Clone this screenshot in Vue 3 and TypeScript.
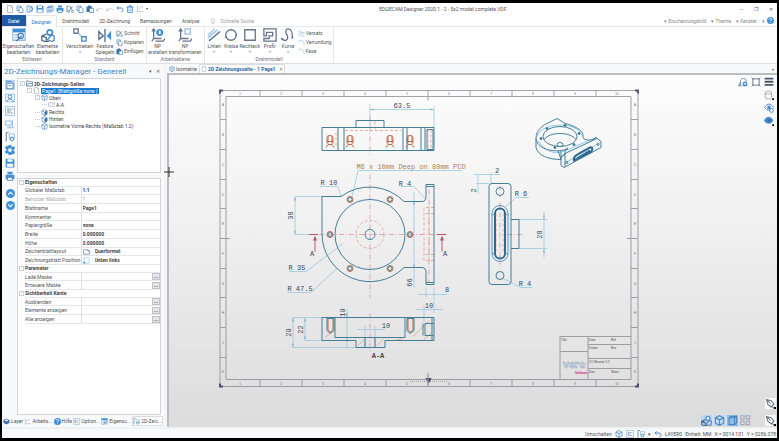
<script setup lang="ts">
import { ref } from 'vue'

interface Tool { label: string; icon: string; width?: string; menu?: boolean }
interface Group { name: string; tools: Tool[]; small: Tool[] }
interface Prop { label: string; value?: string; kind: 'head' | 'text' | 'more' | 'icon'; muted?: boolean; icon?: string }

const quick = ['page', 'copy', 'export', 'save', 'pages', 'print', 'cut', 'copy', 'paste', 'undo', 'undo', 'redo', 'trash', 'plane']
const menus = ['Drahtmodell', '2D-Zeichnung', 'Bemassungen', 'Analyse']
const groups: Group[] = [
  { name: 'Editieren', small: [], tools: [
    { label: 'Eigenschaften bearbeiten', icon: 'props', width: 'wide' },
    { label: 'Elemente bearbeiten', icon: 'element' }] },
  { name: 'Standard', tools: [
    { label: 'Verschieben', icon: 'move', menu: true, width: 'wide' },
    { label: 'Feature Spiegeln', icon: 'mirror', width: 'slim' }],
    small: [{ label: 'Schnitt', icon: 'cut' }, { label: 'Kopieren', icon: 'copy' }, { label: 'Einfügen', icon: 'paste' }] },
  { name: 'Arbeitsebene', small: [], tools: [
    { label: 'NP erstellen', icon: 'npnew', width: 'slim' },
    { label: 'NP transformieren', icon: 'npmove', width: 'broad' }] },
  { name: 'Drahtmodell', tools: [
    { label: 'Linien', icon: 'lines', menu: true, width: 'thin' },
    { label: 'Kreise', icon: 'circle', menu: true, width: 'thin' },
    { label: 'Rechteck', icon: 'rect', menu: true, width: 'slim' },
    { label: 'Profil', icon: 'profile', menu: true, width: 'slim' },
    { label: 'Kurve', icon: 'curve', menu: true, width: 'thin' }],
    small: [{ label: 'Versatz', icon: 'offset' }, { label: 'Verrundung', icon: 'fillet' }, { label: 'Fase', icon: 'fillet' }] }
]
const side = ['sheet', 'profileView', 'sheetGrid', 'rows', 'detail', 'gear', 'save', 'print']
const tree = [
  { text: '2D-Zeichnungs-Seiten', icon: 'folder', level: 0, open: true },
  { text: 'Page1 (Blattgröße none )', icon: 'page', level: 1, open: true, selected: true },
  { text: 'Oben', icon: 'cube', level: 2, open: true },
  { text: 'A-A', icon: 'section', level: 3 },
  { text: 'Rechts', icon: 'cubeSide', level: 2 },
  { text: 'Hinten', icon: 'cubeSide', level: 2 },
  { text: 'Isometrie Vorne Rechts (Maßstab 1:2)', icon: 'cube', level: 2 }
]
const props = ref<Prop[]>([
  { label: 'Eigenschaften', kind: 'head' },
  { label: 'Globaler Maßstab', value: '1:1', kind: 'text' },
  { label: 'Benutzer Maßstab', value: '1', kind: 'text', muted: true },
  { label: 'Blattname', value: 'Page1', kind: 'text' },
  { label: 'Kommentar', value: '', kind: 'text' },
  { label: 'Papiergröße', value: 'none', kind: 'text' },
  { label: 'Breite', value: '0.000000', kind: 'text' },
  { label: 'Höhe', value: '0.000000', kind: 'text' },
  { label: 'Zeichenblattlayout', value: 'Querformat', kind: 'icon', icon: 'landscape' },
  { label: 'Zeichnungsblatt Position', value: 'Unten links', kind: 'icon', icon: 'corner' },
  { label: 'Parameter', kind: 'head' },
  { label: 'Lade Maske', value: '', kind: 'more' },
  { label: 'Erneuere Maske', value: '', kind: 'more' },
  { label: 'Sichtbarkeit Kante', kind: 'head' },
  { label: 'Ausblenden', value: '', kind: 'more' },
  { label: 'Elemente anzeigen', value: '', kind: 'more' },
  { label: 'Alle anzeigen', value: '', kind: 'more' }
])
const panels = [
  { text: 'Layer', icon: 'layer' }, { text: 'Arbeits...', icon: 'plane' }, { text: 'Hilfe', icon: 'help' },
  { text: 'Option...', icon: 'sheetGrid' }, { text: 'Eigensc...', icon: 'props' }, { text: '2D-Zeic...', icon: 'detail' }
]
const search = ref('')

const topTicks = [260, 302, 344, 386, 428, 470, 512, 554, 596]
const sideTicks = [120, 150, 180, 209, 239, 269, 298, 328, 358]
const topLabels = [240, 281, 323, 365, 407, 449, 491, 533, 575, 617]
const sideLabels = [106, 136, 166, 196, 225, 255, 285, 314, 344, 373]
const holes = [[330, 235], [350, 200], [390, 200], [410, 235], [350, 269], [390, 269]]
const topHoles = [330, 350, 390, 410]
</script>

<template>
  <svg class="defs" aria-hidden="true">
    <symbol id="page" viewBox="0 0 16 16"><path class="ln gy" d="M3 1h7l3 3v11H3zM10 1v3h3" /></symbol>
    <symbol id="copy" viewBox="0 0 16 16"><path class="ln" d="M2 2h8v9H2z" /><path class="ln fw" d="M6 5h5l3 3v7H6z" /></symbol>
    <symbol id="export" viewBox="0 0 16 16"><path class="ln" d="M2 2h6v4M2 2v12h6v-4M5 8h9M10 4l4 4-4 4" /><path class="ln" d="M9 2l5 3M9 14l5-3" /></symbol>
    <symbol id="save" viewBox="0 0 16 16"><path class="fl" d="M1 1h12l2 2v12H1z" /><path class="wh" d="M4 2h8v4H4zM3 9h10v5H3z" /></symbol>
    <symbol id="pages" viewBox="0 0 16 16"><path class="ln fw" d="M5 2h9v10H5z" /><path class="ln fw" d="M2 5h8v9H2z" /><path class="ln" d="M4 8h4M4 11h4M7 4h5" /></symbol>
    <symbol id="print" viewBox="0 0 16 16"><path class="fl" d="M1 6h14v7H1zM4 1h8v4H4z" /><path class="ln fw" d="M4 10h8v5H4z" /></symbol>
    <symbol id="cut" viewBox="0 0 16 16"><path class="ln dk" d="M2 2v12M7 2l6 9M13 3L6 12" /><circle class="ln" cx="5" cy="13" r="2" /><circle class="ln" cx="13" cy="13" r="2" /><path class="ln" d="M2 2h4" /></symbol>
    <symbol id="paste" viewBox="0 0 16 16"><path class="fl nv" d="M1 3h11v11H1zM4 1h5v3H4z" /><path class="ln fw" d="M7 7h8v8H7z" /></symbol>
    <symbol id="undo" viewBox="0 0 16 16"><path class="ln lt" d="M2 7l-1 5 5-1M2 11c3-6 9-6 12-1" /></symbol>
    <symbol id="redo" viewBox="0 0 16 16"><path class="ln th" d="M5 3L2 6l3 3M2 6h8c5 0 5 7 1 8" /></symbol>
    <symbol id="trash" viewBox="0 0 16 16"><path class="ln" d="M3 4h10v11H3zM1 4h14M6 1h4v3M6 7v6M10 7v6" /></symbol>
    <symbol id="plane" viewBox="0 0 16 16"><path class="ln lt" d="M3 1v12h12M3 13l-2 2M6 9l3-5h5" /></symbol>
    <symbol id="props" viewBox="0 0 16 16"><path class="ln lb fw" d="M1 1h14v13H1z" /><path class="fl" d="M1 1h14v4H1z" /><path class="ln lb" d="M3 8h4M3 11h4" /><circle class="ln" cx="10" cy="9" r="3" /><path class="ln dk" d="M5 15l6-6" /></symbol>
    <symbol id="element" viewBox="0 0 16 16"><path class="ln dk" d="M6 7L1 9v5l5 2 5-2M6 10v6M1 9l5 2" /><circle class="fl" cx="10" cy="5" r="4" /><circle class="wh" cx="10" cy="5" r="2" /><path class="ln" d="M7 14l5-6 3 1v5l-4 2" /></symbol>
    <symbol id="move" viewBox="0 0 16 16"><path class="ln gd" d="M1 1h5v5H1z" /><path class="ln lb" d="M6 6l4 4" /><path class="ln" d="M10 10h5v5h-5z" /></symbol>
    <symbol id="mirror" viewBox="0 0 16 16"><path class="ln dk" d="M1 4v9l5-4z" /><path class="fl" d="M15 3v11l-5-5z" /><path class="ln dk" d="M8 1v15" /></symbol>
    <symbol id="npnew" viewBox="0 0 16 16"><path class="ln gd" d="M3 2v10h9M3 12l-2 3M1 4l2-3 2 3M5 15h9l2-3" /><circle class="fl" cx="10" cy="5" r="4" /><path class="wh" d="M9 3h2v4H9z" /></symbol>
    <symbol id="npmove" viewBox="0 0 16 16"><path class="ln gd" d="M3 2v10h9M3 12l-2 3M1 4l2-3 2 3M5 15h9l2-3" /><path class="ln lb" d="M8 1h6v6H8z" /></symbol>
    <symbol id="lines" viewBox="0 0 16 16"><path class="ln lb" d="M1 11L12 2M1 8l8-7" /><path class="ln dk" d="M3 14L15 4" /><circle class="fl nv" cx="3" cy="14" r="1" /></symbol>
    <symbol id="circle" viewBox="0 0 16 16"><circle class="ln gd" cx="8" cy="8" r="6" /><circle class="fl nv" cx="2" cy="10" r="1" /><circle class="fl nv" cx="14" cy="8" r="1" /></symbol>
    <symbol id="rect" viewBox="0 0 16 16"><path class="ln gd" d="M2 2h12v12H2z" /></symbol>
    <symbol id="profile" viewBox="0 0 16 16"><path class="ln gd" d="M1 9V1h14v14H1v-3h6V9h4V5H4v4z" /></symbol>
    <symbol id="curve" viewBox="0 0 16 16"><path class="ln gd" d="M1 12c4 5 8 1 6-4-3-4-1-7 1-7 4 0 5 3 5 10" /><circle class="fl nv" cx="1" cy="12" r="1" /><circle class="fl nv" cx="13" cy="11" r="1" /></symbol>
    <symbol id="offset" viewBox="0 0 16 16"><path class="ln lb" d="M1 2h5l3 4h6M1 8h5l3-4M1 13h4l4-4h6M9 14h6" /></symbol>
    <symbol id="fillet" viewBox="0 0 16 16"><path class="ln lb" d="M2 3h5c4 0 7 3 7 11" /></symbol>
    <symbol id="sheet" viewBox="0 0 16 16"><path class="fl lb" d="M0 0h16v16H0z" /><path class="ln fw" d="M3 5h10v9H3zM6 9h4" /><path class="ln" d="M1 2h9" /></symbol>
    <symbol id="profileView" viewBox="0 0 16 16"><path class="ln lb" d="M1 2h14v12H1z" /><circle class="ln" cx="8" cy="6" r="3" /><path class="ln" d="M3 14c1-6 9-6 10 0" /></symbol>
    <symbol id="sheetGrid" viewBox="0 0 16 16"><path class="ln fw lb" d="M1 1h14v14H1z" /><path class="ln gy" d="M3 5h10M3 8h7M3 11h10M5 3v9" /></symbol>
    <symbol id="rows" viewBox="0 0 16 16"><path class="ln lb" d="M1 3h9v7H1zM12 2v12M3 14h11M7 10v4" /></symbol>
    <symbol id="detail" viewBox="0 0 16 16"><path class="ln gd" d="M2 1v14M2 1h4" /><path class="ln lb" d="M7 3h8v7H7z" /><circle class="ln" cx="11" cy="11" r="3" /></symbol>
    <symbol id="gear" viewBox="0 0 16 16"><path class="fl" d="M6 0h4l1 3 4-1 1 4-3 2 3 3-2 4-3-1-1 2H6l-1-3-4 1-1-4 3-2-3-3 2-4 3 1z" /><circle class="wh" cx="8" cy="8" r="3" /></symbol>
    <symbol id="up" viewBox="0 0 16 16"><circle class="fl" cx="8" cy="8" r="8" /><path class="lnw" d="M4 10l4-4 4 4" /></symbol>
    <symbol id="down" viewBox="0 0 16 16"><circle class="fl" cx="8" cy="8" r="8" /><path class="lnw" d="M4 6l4 4 4-4" /></symbol>
    <symbol id="help" viewBox="0 0 16 16"><circle class="fl" cx="8" cy="8" r="8" /><path class="lnw" d="M5 6c0-4 7-3 6 0-1 2-3 2-3 4M8 12v1" /></symbol>
    <symbol id="folder" viewBox="0 0 16 16"><path class="ln dk" d="M1 2h5l1 2h8v10H1z" /><path class="ln" d="M4 14V8h11" /></symbol>
    <symbol id="cube" viewBox="0 0 16 16"><path class="ln" d="M8 1l6 3v8l-6 3-6-3V4zM2 4l6 3 6-3M8 7v8" /></symbol>
    <symbol id="cubeSide" viewBox="0 0 16 16"><path class="ln" d="M8 1l6 3v8l-6 3-6-3V4zM2 4l6 3 6-3" /><path class="fl nv" d="M8 7l6-3v8l-6 3z" /></symbol>
    <symbol id="cubeLight" viewBox="0 0 16 16"><path class="ln" d="M3 4l3-2h8v9l-3 3H3zM3 4h8v10M11 4l3-2" /></symbol>
    <symbol id="section" viewBox="0 0 16 16"><path class="ln lt" d="M1 4h14v9H1zM1 10l5-6M6 13l8-9" /></symbol>
    <symbol id="landscape" viewBox="0 0 16 16"><path class="ln gd" d="M1 4h10l4 3v7H1zM11 4v3h4" /></symbol>
    <symbol id="corner" viewBox="0 0 16 16"><path class="ln lb" d="M2 2h12v12H2z" /><path class="fl" d="M1 11h4v4H1z" /></symbol>
    <symbol id="layer" viewBox="0 0 16 16"><path class="fl nv" d="M8 1l7 4v6l-7 4-7-4V5z" /><path class="wh" d="M8 3l4 2-4 3-4-3z" /></symbol>
    <symbol id="zoomFit" viewBox="0 0 16 16"><path class="ln gd" d="M4 12C2 0 13 0 13 7M4 9l-3 5h5" /><circle class="fl" cx="11" cy="11" r="4" /><path class="lnw" d="M9 11h4" /></symbol>
    <symbol id="fit" viewBox="0 0 16 16"><path class="ln gd" d="M3 3h10v10H3zM1 1l3 3M15 1l-3 3M1 15l3-3M15 15l-3-3" /></symbol>
    <symbol id="list" viewBox="0 0 16 16"><path class="fl gr" d="M1 1h14v3H1zM1 6h14v3H1zM1 11h14v3H1z" /></symbol>
    <symbol id="cylinder" viewBox="0 0 16 16"><path class="ln gy" d="M2 4c0-3 10-3 10 0v8c0 3-10 3-10 0zM2 4c0 3 10 3 10 0" /><path class="fl bk" d="M13 13h3v3h-3z" /></symbol>
    <symbol id="eye" viewBox="0 0 16 16"><path class="ln fw" d="M1 7c4-7 10-7 14 0-4 6-10 6-14 0z" /><circle class="fl" cx="8" cy="7" r="3" /><circle class="ln fw" cx="12" cy="12" r="3" /></symbol>
    <symbol id="eyeFull" viewBox="0 0 16 16"><path class="fl" d="M0 7c4-8 11-8 15 0-4 7-11 7-15 0z" /><circle class="fl nv" cx="8" cy="7" r="3" /><path class="fl bk" d="M13 13h3v3h-3z" /></symbol>
    <symbol id="pen" viewBox="0 0 16 16"><path class="ln gd" d="M2 2l7 2 4 5-4 4-5-4zM2 2l6 6M10 12l3 3" /><path class="fl bk" d="M13 13h3v3h-3z" /></symbol>
    <symbol id="dots" viewBox="0 0 16 16"><path class="ln gy" d="M1 1h5v5H1zM9 1h5v5H9zM1 9h5v5H1zM9 9h5v5H9z" /></symbol>
  </svg>

  <main class="app">
    <header class="title">
      <nav class="quick" aria-label="Schnellzugriff">
        <button v-for="(q, i) in quick" :key="i" type="button"><svg><use :href="'#' + q" /></svg></button>
        <span class="caret">▾</span>
      </nav>
      <span class="name">EDGECAM Designer 2020.1 - 2 - 5x2 model complete.VDF</span>
      <div class="win"><button type="button">–</button><button type="button">❐</button><button type="button">✕</button></div>
    </header>

    <nav class="menu">
      <button type="button" class="file">Datei</button>
      <button type="button" class="active">Designer</button>
      <button v-for="m in menus" :key="m" type="button">{{ m }}</button>
      <label class="search">
        <svg viewBox="0 0 16 16"><path class="ln gy" d="M5 10c-6-11 12-11 6 0v3H5zM6 15h4" /></svg>
        <input v-model="search" type="search" placeholder="Schnelle Suche" aria-label="Schnelle Suche">
      </label>
      <div class="view">
        <button type="button">▾ Erscheinungsbild</button><button type="button">▾ Thema</button><button type="button">▾ Fenster</button>
        <button type="button">▾ <svg><use href="#help" /></svg></button>
      </div>
    </nav>

    <section class="ribbon">
      <div v-for="g in groups" :key="g.name" class="group">
        <div class="tools">
          <button v-for="t in g.tools" :key="t.label" type="button" class="tool" :class="t.width">
            <svg><use :href="'#' + t.icon" /></svg><span>{{ t.label }}</span><i v-if="t.menu">▾</i>
          </button>
          <div v-if="g.small.length" class="smalls">
            <button v-for="s in g.small" :key="s.label" type="button"><svg><use :href="'#' + s.icon" /></svg>{{ s.label }}</button>
          </div>
        </div>
        <span class="caption">{{ g.name }}</span>
      </div>
    </section>

    <section class="body">
      <aside class="manager">
        <header><h1>2D-Zeichnungs-Manager - Generell</h1><button type="button">▾</button><button type="button">✕</button></header>
        <div class="cols">
          <nav class="side">
            <button v-for="s in side" :key="s" type="button"><svg><use :href="'#' + s" /></svg></button>
            <button type="button" class="round first"><svg><use href="#up" /></svg></button>
            <button type="button" class="round"><svg><use href="#down" /></svg></button>
          </nav>
          <div class="stack">
            <ul class="tree">
              <li v-for="n in tree" :key="n.text" :class="['l' + n.level, { selected: n.selected }]">
                <b v-if="n.open" class="box">−</b><b v-else class="twig"></b>
                <svg><use :href="'#' + n.icon" /></svg><span>{{ n.text }}</span>
              </li>
            </ul>
            <div class="sheet">
              <table>
                <colgroup><col class="c-gut"><col class="c-label"><col></colgroup>
                <tbody>
                  <tr v-for="(p, i) in props" :key="i" :class="[p.kind, { muted: p.muted }]">
                    <td class="gut"><b v-if="p.kind === 'head'" class="box">−</b></td>
                    <th v-if="p.kind === 'head'" colspan="2" scope="rowgroup">{{ p.label }}</th>
                    <template v-else>
                      <th scope="row"><label :for="'p' + i">{{ p.label }}</label></th>
                      <td><div class="cell">
                        <svg v-if="p.icon"><use :href="'#' + p.icon" /></svg>
                        <input :id="'p' + i" v-model="p.value" type="text">
                        <button v-if="p.kind === 'more'" type="button">...</button>
                      </div></td>
                    </template>
                  </tr>
                </tbody>
              </table>
            </div>
          </div>
        </div>
        <nav class="panels">
          <button v-for="(p, i) in panels" :key="p.text" type="button" :class="{ on: i === 5 }"><svg><use :href="'#' + p.icon" /></svg>{{ p.text }}</button>
        </nav>
      </aside>

      <section class="work">
        <nav class="docs">
          <button type="button"><svg><use href="#cube" /></svg>Isometrie</button>
          <button type="button" class="on"><svg><use href="#page" /></svg>2D Zeichnungsseite - 1 Page1 <i>✕</i></button>
          <span class="caret">▾</span>
        </nav>
        <div class="canvas">
          <svg class="drawing" viewBox="169 76 608 351">
            <g class="frame">
              <path d="M220 91H638V387H220ZM226 97H631V380H226Z" />
              <path v-for="x in topTicks" :key="'t' + x" :d="`M${x} 91v${x === 428 ? 10 : 6}M${x} ${x === 428 ? 376 : 380}V387`" />
              <path v-for="y in sideTicks" :key="'s' + y" :d="`M220 ${y}h${y === 239 ? 10 : 6}M${y === 239 ? 627 : 631} ${y}H638`" />
              <text v-for="(x, i) in topLabels" :key="'a' + x" :x="x" y="95">{{ i + 1 }}</text>
              <text v-for="(x, i) in topLabels" :key="'b' + x" :x="x" y="385">{{ i + 1 }}</text>
              <text v-for="(y, i) in sideLabels" :key="'c' + y" x="635" :y="y">{{ 'ABCDEFGHJK'[i] }}</text>
              <text v-for="(y, i) in sideLabels" :key="'d' + y" x="223" :y="y">{{ 'ABCDEFGHJK'[i] }}</text>
              <path class="mark" d="M635 91h3v3M635 387h3v-3M223 387h-3v-3M223 91h-3v3" />
              <path class="dots" d="M410 382H447" /><path class="tri" d="M426 379h5l-2 4z" /><path d="M428 373V386" />
              <path d="M560 337H631M560 337V380M588 337V380M560 352H588M588 345H631M588 359H631M588 369H631" />
            </g>
            <g class="block">
              <text x="561" y="341">Title</text><text x="589" y="341">Date</text><text x="611" y="341">Ref</text>
              <text x="589" y="349">Drawn</text><text x="611" y="349">Rev</text><text x="589" y="363">CC Reactor 1:1</text>
              <text x="589" y="373">Size</text><text x="611" y="373">Sheet</text>
              <text class="vero" x="563" y="368">vero</text><text class="soft" x="575" y="374">Software</text>
            </g>

            <g class="dim">
              <path d="M370 105V128M434 107V128M370 110H434M295 197H322M295 235H318M295 197V235M414 193V288M426 288V298M434 288V313M418 295H447M424 306V323M416 310H443" />
              <path d="M320 187H338L341 197M401 187H414L425 199M352 197L358 171H462M289 272H306L343 244M287 293H311L337 269" />
              <path d="M293 318H322M293 318V348H356M305 318V341H322M347 310V349M357 330H385M365 326V348M375 326V348" />
              <path d="M474 175H500M491 173V184M478 175V194M476 184H489M529 198H516L506 207M532 288H521L503 279M519 220H547M519 249H547M544 212V258" />
              <path class="head" d="M370 110l4-1v2zM434 110l-4-1v2zM295 197l-1 4h2zM295 235l-1-4h2zM414 201l-1 4h2zM414 269l-1-4h2zM293 318l-1 4h2zM293 348l-1-4h2zM305 318l-1 4h2zM305 341l-1-4h2zM347 318l-1-4h2zM347 338l-1 4h2zM544 220l-1-4h2zM544 249l-1 4h2z" />
            </g>
            <g class="hid">
              <path d="M336 133V147M345 131H401M375 122V130M428 130V150M431 130V150M424 208V261M429 208V261M426 208H434M426 261H434M426 214H434M426 255H434" />
              <circle cx="370" cy="235" r="14" />
              <path d="M496 214V253M503 214V253" />
              <path class="axis" d="M370 117V156M370 175V298M370 314V353M309 235H448M500 203V265M507 235H523M500 186V198M429 190V283" />
            </g>
            <g class="orange">
              <path v-for="x in topHoles" :key="'o' + x" :d="`M${x - 3} 144v-5c0-4 6-4 6 0v5M${x - 3} 142h6M${x - 4} 148l2-3h4l2 3M${x - 2} 136v8M${x + 2} 136v8`" />
              <circle v-for="h in holes" :key="'h' + h" :cx="h[0]" :cy="h[1]" r="3" />
              <path d="M328 319h5v11l-3 3-2-3zM408 319h5v11l-3 3-2-3z" />
              <path class="hatch" d="M413 337l16-16M325 338l8-6M377 346l7-7M358 346l6-6M424 340l8-7M396 341l6-2" />
            </g>
            <g class="part">
              <path d="M322 128H434V151H322ZM356 128V121H384V128M338 128V151M344 128V151M403 128V151M407 128V151M421 128V151M425 128V151M427 130H433V150H427Z" />
              <path d="M322 235V197H341A48 48 0 0 1 404 202H422Q426 202 426 197V185H434V285H426V273Q426 268 422 268H404A48 48 0 0 1 322 235M426 187H434M426 283H434" />
              <circle cx="370" cy="235" r="35" /><circle cx="370" cy="235" r="5" />
              <circle v-for="h in holes" :key="'k' + h" :cx="h[0]" :cy="h[1]" r="2" />
              <path d="M322 318H434V341H385V348H356V341H322ZM335 318V338H405V318M365 338V348M375 338V348M327 319H334V331L330 334L327 331ZM407 319H414V331L410 334L407 331ZM434 324H425V336H434M423 324V336M432 318V341" />
              <rect x="489" y="184" width="22" height="101" rx="3" />
              <circle cx="500" cy="192" r="4" /><circle cx="500" cy="276" r="4" />
              <path d="M511 220H519V249H511" />
            </g>
            <g class="slot">
              <rect x="492" y="206" width="16" height="56" rx="8" /><rect class="bold" x="495" y="209" width="10" height="50" rx="5" />
              <path d="M492 215H495M492 254H495M505 215H508M505 254H508" />
            </g>
            <g class="section-mark"><path d="M309 235H318M437 235H446M315 252V239M442 252V239" /><path class="head" d="M315 236l-2 5h4zM442 236l-2 5h4z" /></g>

            <g class="iso">
              <path class="light" d="M537 137C541 123 576 121 582 136M538 141C546 154 560 157 568 148M564 164L600 143M563 152L596 138" />
              <path d="M536 139C536 130 543 126 549 123L557 119L565 124C577 127 584 132 583 137C583 141 589 141 593 140L596 138L601 142V148L564 168L561 166V158C567 155 563 151 568 149C558 154 537 151 536 139V148C538 156 548 160 561 160" />
              <ellipse cx="560" cy="137" rx="17" ry="10" /><path d="M544 140C550 132 570 132 576 140M561 158L565 154L597 139M565 154V167M561 160V151M558 151L561 160" />
              <ellipse cx="560" cy="145" rx="3" ry="2" /><circle cx="567" cy="163" r="1" /><circle cx="598" cy="145" r="1" />
              <path class="bold" d="M574 161C573 157 575 156 590 148C592 147 594 150 590 153ZM577 159L590 151" />
              <g class="bolts"><circle cx="547" cy="129" r="1" /><circle cx="565" cy="126" r="1" /><circle cx="579" cy="134" r="1" /><circle cx="574" cy="145" r="1" /><circle cx="555" cy="148" r="1" /><circle cx="541" cy="139" r="1" /></g>
            </g>

            <g class="txt">
              <text x="402" y="108">63.5</text><text class="note" x="411" y="169">M6 x 10mm Deep on 80mm PCD</text>
              <text x="329" y="185">R 10</text><text x="405" y="186">R 4</text><text x="297" y="270">R 35</text><text x="300" y="291">R 47.5</text>
              <text x="312" y="256">A</text><text x="445" y="256">A</text><text x="447" y="292">8</text><text x="429" y="308">10</text>
              <text x="386" y="328">10</text><text class="cap" x="378" y="358">A-A</text><text x="497" y="173">2</text>
              <text x="521" y="196">R 6</text><text x="525" y="286">R 4</text>
              <text transform="translate(293 216) rotate(-90)">38</text><text transform="translate(412 283) rotate(-90)">66</text>
              <text transform="translate(345 313) rotate(-90)">19</text><text transform="translate(303 330) rotate(-90)">22</text>
              <text transform="translate(291 333) rotate(-90)">29</text><text transform="translate(476 191) rotate(-90)">2</text>
              <text transform="translate(542 235) rotate(-90)">28</text>
            </g>
          </svg>
          <svg class="cross" viewBox="0 0 10 10"><path d="M5 0V10M0 5H10" /></svg>
          <div class="vtools">
            <div><button type="button"><svg><use href="#zoomFit" /></svg></button><button type="button"><svg><use href="#fit" /></svg></button><button type="button"><svg><use href="#list" /></svg></button></div>
            <button type="button"><svg><use href="#cylinder" /></svg></button>
            <button type="button"><svg><use href="#eye" /></svg></button>
            <button type="button"><svg><use href="#eyeFull" /></svg></button>
          </div>
          <div class="btools">
            <button type="button" class="on"><svg><use href="#element" /></svg></button><button type="button" class="on"><svg><use href="#cube" /></svg></button>
            <button type="button" class="on deep"><svg><use href="#cubeLight" /></svg></button><button type="button"><svg><use href="#dots" /></svg></button>
            <div class="pens"><button type="button"><svg><use href="#pen" /></svg></button><button type="button"><svg><use href="#pen" /></svg></button></div>
          </div>
        </div>
      </section>
    </section>

    <footer class="status">
      <span>Umschalten</span>
      <svg><use href="#cube" /></svg><svg><use href="#sheetGrid" /></svg><svg><use href="#detail" /></svg><span>▾</span><svg><use href="#redo" /></svg>
      <span>LAYER0</span><span>Einheit: MM</span><span>X = 0014.101</span><span>Y = 0286.378</span>
    </footer>
  </main>
</template>

<style>
body { margin: 0; background: #000; }
</style>

<style scoped>
.defs { position: absolute; width: 0; height: 0; }
.app { box-sizing: border-box; height: 100vh; padding: 3px 2px 3px; background: #000; display: flex; flex-direction: column; font: 5px/6px Roboto, sans-serif; color: #555; overflow: hidden; }
button, input { font: inherit; color: inherit; border: 0; padding: 0; margin: 0; background: none; min-width: 0; }
button svg, li svg, .cell svg, .status svg { width: 8px; height: 8px; flex: none; display: block; }
i { font-style: normal; }
.ln { fill: none; stroke: #4a87c2; stroke-width: 1.5; }
.ln.fw { fill: #fff; }
.ln.gy { stroke: #a0a9b4; }
.ln.gd { stroke: #66758a; }
.ln.dk { stroke: #486788; }
.ln.lb { stroke: #93bfe4; }
.ln.lt { stroke: #b0bac5; }
.ln.th { stroke-width: 2; }
.lnw { fill: none; stroke: #fff; stroke-width: 2; }
.fl { fill: #3f90d6; }
.fl.nv { fill: #3e70a8; }
.fl.gr { fill: #46586c; }
.fl.lb { fill: #b8d5f0; }
.fl.bk { fill: #111; }
.wh { fill: #fff; }

.title { display: flex; align-items: center; height: 12px; flex: none; background: #fff; }
.quick { display: flex; align-items: center; gap: 2px; padding-left: 4px; flex: 7 1 0; box-sizing: border-box; }
.caret { font-size: 4px; }
.win { flex: 5 1 0; box-sizing: border-box; display: flex; justify-content: flex-end; gap: 11px; padding-right: 4px; }

.menu { display: flex; align-items: stretch; height: 11px; flex: none; background: #fff; border-bottom: 1px solid #e6e8ea; }
.menu > button { padding: 0 5px; }
.menu > .file { background: #2457a4; color: #fff; padding: 0 6px; }
.menu > .active { color: #2e78c0; border: 1px solid #e3e6e9; border-bottom: 0; margin-bottom: -1px; background: #fff; }
.search { display: flex; align-items: center; gap: 4px; padding-left: 6px; flex: 1; }
.search svg { width: 6px; height: 6px; }
.search input { width: 60px; outline: none; appearance: none; }
.search input::placeholder { color: #999; opacity: 1; }
.view { display: flex; align-items: center; gap: 5px; color: #888; padding-right: 3px; }
.view button { display: flex; align-items: center; gap: 2px; }
.view svg { width: 7px; height: 7px; }

.ribbon { display: flex; height: 37px; flex: none; background: #fff; border-bottom: 1px solid #dcdfe2; box-sizing: border-box; }
.group { display: flex; flex-direction: column; border-right: 1px solid #e4e6e8; padding: 1px 1px 0; }
.tools { display: flex; flex: 1; }
.tool { width: 27px; display: flex; flex-direction: column; align-items: center; text-align: center; }
.tool.wide { width: 31px; }
.tool.broad { width: 35px; }
.tool.slim { width: 20px; }
.tool.thin { width: 17px; }
.tool svg { width: 14px; height: 14px; margin-bottom: 1px; }
.tool i { font-size: 4px; line-height: 5px; color: #999; }
.caption { text-align: center; color: #777; line-height: 8px; }
.smalls { display: flex; flex-direction: column; gap: 1px; padding: 1px 1px 0; }
.smalls button { display: flex; align-items: center; gap: 1px; height: 8px; }
.smalls svg { width: 7px; height: 7px; }

.body { display: flex; flex: 1; min-height: 0; background: #f4f5f6; }
.manager { width: 162px; flex: none; display: flex; flex-direction: column; background: #f8f9fa; }
.manager header { display: flex; align-items: center; gap: 4px; height: 14px; padding: 0 4px 0 2px; }
h1 { flex: 1; margin: 0; font: 8px/9px Roboto, sans-serif; color: #3d84c4; white-space: nowrap; }
.cols { display: flex; flex: 1; min-height: 0; }
.side { width: 14px; display: flex; flex-direction: column; align-items: center; gap: 3px; padding: 2px 0 0 1px; }
.side svg { width: 10px; height: 10px; }
.side .first { margin-top: 5px; }
.side .round { height: 9px; }
.side .round svg { width: 9px; height: 9px; }
.stack { flex: 1; display: flex; flex-direction: column; gap: 5px; min-width: 0; margin-right: 3px; }
.tree { box-sizing: border-box; height: 95px; margin: 0; padding: 1px 2px 42px; list-style: none; background: #fff; border: 1px solid #d3d6d9; display: grid; grid-template-rows: repeat(7, minmax(0, 1fr)); }
.tree li { display: flex; align-items: center; gap: 1px; white-space: nowrap; color: #444; }
.tree svg { width: 7px; height: 7px; }
.tree .l0 { font-weight: bold; }
.tree .l1 { padding-left: 7px; }
.tree .l2 { padding-left: 15px; }
.tree .l3 { padding-left: 22px; }
.selected span { background: #1779d2; color: #fff; padding: 0 1px; }
.box { width: 3px; height: 3px; border: 1px solid #ccd0d4; color: #888; font: 3px/3px Roboto, sans-serif; text-align: center; display: block; flex: none; }
.twig { width: 5px; border-top: 1px dotted #c6cacd; flex: none; }
.sheet { flex: 1; background: #fff; border: 1px solid #d3d6d9; min-height: 0; }
table { width: 100%; height: 145px; border-collapse: collapse; table-layout: fixed; }
.c-gut { width: 7px; }
.c-label { width: 56px; }
td, th { padding: 0; text-align: left; font-weight: normal; border-bottom: 1px solid #e4e6e9; line-height: 6px; }
td.gut { border: 0; }
.gut .box { margin-left: 1px; }
th { color: #555; white-space: nowrap; }
.head th { font-weight: bold; color: #444; }
tr:not(.head) th { border-right: 1px solid #dcdfe2; }
.muted { color: #aaa; }
.muted th { color: #aaa; }
.cell { display: flex; align-items: center; height: 7px; padding-left: 1px; gap: 5px; font-weight: bold; color: #444; }
.muted .cell { font-weight: normal; color: #999; }
.cell input { flex: 1; height: 6px; }
.cell svg { width: 7px; height: 7px; }
.cell button { width: 8px; height: 7px; box-sizing: border-box; background: #e4e6e8; border: 1px solid #c0c4c8; line-height: 3px; }
.panels { display: flex; align-items: center; justify-content: space-between; height: 12px; padding: 0 1px; }
.panels button { display: flex; align-items: center; gap: 1px; height: 10px; white-space: nowrap; }
.panels svg { width: 7px; height: 7px; }
.panels .on { background: #fff; border: 1px solid #d9dcdf; box-sizing: border-box; }

.work { flex: 1; display: flex; flex-direction: column; min-width: 0; margin-left: 3px; }
.docs { display: flex; align-items: stretch; height: 11px; flex: none; background: #f8f9fa; border-bottom: 2px solid #b9bdc2; box-sizing: border-box; }
.docs button { display: flex; align-items: center; gap: 1px; padding: 0 2px; white-space: nowrap; }
.docs svg { width: 6px; height: 6px; }
.docs .on { background: #fff; font-weight: bold; color: #2c649e; border: 1px solid #d9dcdf; border-bottom: 0; padding: 0 1px; }
.docs .on i { font-weight: normal; color: #777; padding-left: 3px; }
.docs .caret { margin-left: auto; padding: 3px 3px 0; }
.canvas { position: relative; flex: 1; min-height: 0; border-left: 2px solid #b9bdc2; background: linear-gradient(#fdfdfe, #f1f1f2 40%, #dcdcdd); }
.drawing { display: block; width: 100%; height: 100%; }
.cross { position: absolute; width: 10px; height: 10px; left: -5px; top: 26%; }
.cross path { stroke: #333; fill: none; }
.vtools { position: absolute; top: 2px; right: 3px; display: flex; flex-direction: column; align-items: flex-end; gap: 3px; }
.vtools div { display: flex; gap: 3px; }
.vtools svg { width: 10px; height: 10px; }
.btools { position: absolute; right: 1px; bottom: 1px; display: flex; align-items: flex-end; gap: 2px; }
.btools svg { width: 11px; height: 11px; }
.btools .on { background: #bdd8f0; }
.btools .deep { background: #8dbce8; }
.pens { display: flex; flex-direction: column; gap: 6px; padding-left: 12px; }
.pens button { background: #fafafa; }

.frame { fill: none; stroke: #8c8c93; stroke-width: 1; opacity: 0.8; }
.frame text, .block text { font: 3px "Liberation Sans", sans-serif; fill: #444; stroke: none; }
.frame text { text-anchor: middle; }
.frame .mark { stroke: #29295a; stroke-width: 2; }
.frame .dots { stroke-dasharray: 1 1; }
.frame .tri { fill: #351f55; stroke: #351f55; }
.block .vero { font: bold 10px "Open Sans", sans-serif; fill: #dfe4ec; stroke: #8a9cb8; stroke-width: 0.5; }
.block .soft { font-weight: bold; fill: #d02a78; }
.dim { fill: none; stroke: #9cc8df; stroke-width: 1; opacity: 0.8; }
.dim .head { fill: #6fa9c8; stroke: none; }
.hid { fill: none; stroke: #e3a083; stroke-width: 1; stroke-dasharray: 3 2; opacity: 0.8; }
.hid .axis { stroke: #d998a5; stroke-dasharray: 5 2 1 2; }
.orange { fill: none; stroke: #bd6a46; stroke-width: 1; }
.orange .hatch { stroke: #dfb193; }
.part { fill: none; stroke: #467d96; stroke-width: 1; }
.slot { fill: none; stroke: #5a93ba; stroke-width: 1; }
.bold { stroke: #2f6890; stroke-width: 2; fill: none; }
.section-mark { stroke: #b45672; fill: none; }
.section-mark .head { fill: #b45672; stroke: none; }
.iso { fill: none; stroke: #467f9c; stroke-width: 1; }
.iso .light { stroke: #8ecbe8; }
.iso .bolts { fill: #255a7c; }
.txt text { font: 7px "Liberation Mono", monospace; fill: #34495a; text-anchor: middle; }
.txt .note { fill: #b5823f; }
.txt .cap { font-weight: bold; }

.status { display: flex; justify-content: flex-end; align-items: center; gap: 3px; height: 9px; flex: none; background: #f8f9fa; padding-right: 1px; border-top: 2px solid #f0f1f2; }
</style>
